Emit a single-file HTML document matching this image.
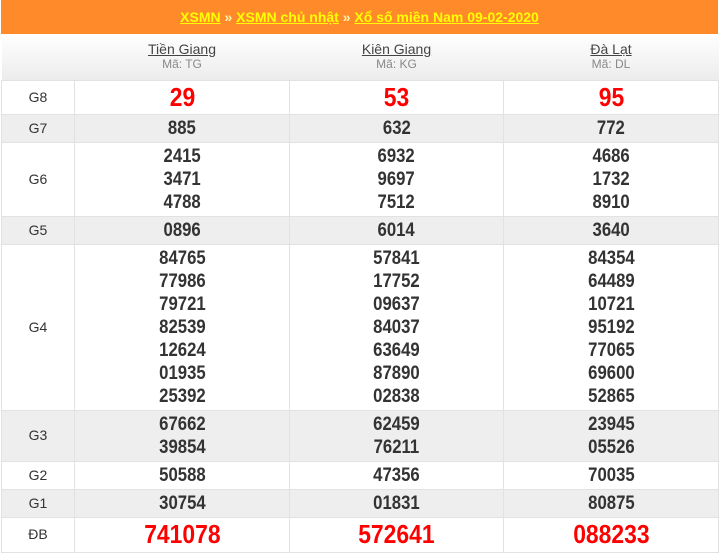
<!DOCTYPE html>
<html><head><meta charset="utf-8"><style>
*{margin:0;padding:0;box-sizing:border-box}
body{width:720px;height:554px;background:#fff;font-family:"Liberation Sans",sans-serif;position:relative;overflow:hidden}
.top{position:absolute;left:1px;top:0;width:717px;height:34px;background:#ff8a2a;text-align:center;font:bold 14px/34px "Liberation Sans",sans-serif;color:#ffff00}
.top a{color:#ffff00;text-decoration:underline}
.top .s{color:#fff6b0}
table{position:absolute;left:1px;top:34px;width:717px;border-collapse:collapse;table-layout:fixed}
td{border:1px solid #e2e2e2;text-align:center;vertical-align:middle;color:#333;font-weight:bold;font-size:19px;line-height:23px}
td span{display:inline-block;transform:scaleX(.88)}
td.l{font-weight:normal;font-size:14px;color:#333}
tr.g td{background:#eee}
tr.h td{background:linear-gradient(#fff,#ececec);border:none;border-bottom:1px solid #e2e2e2;font-weight:normal}
.pn{font-size:14px;color:#444;text-decoration:underline;line-height:16px}
.ma{font-size:12px;color:#888;line-height:15px;font-weight:normal}
.r{color:#f00;font-size:26px}
</style></head><body>
<div class="top"><a>XSMN</a> <span class="s">»</span> <a>XSMN chủ nhật</a> <span class="s">»</span> <a>Xổ số miền Nam 09-02-2020</a></div>
<table>
<colgroup><col style="width:73px"><col style="width:215px"><col style="width:214px"><col style="width:215px"></colgroup>
<tr class="h" style="height:46px"><td></td><td><div class="pn">Tiền Giang</div><div class="ma">Mã: TG</div></td><td><div class="pn">Kiên Giang</div><div class="ma">Mã: KG</div></td><td><div class="pn">Đà Lạt</div><div class="ma">Mã: DL</div></td></tr>
<tr style="height:34px"><td class="l">G8</td><td class="r"><span>29</span></td><td class="r"><span>53</span></td><td class="r"><span>95</span></td></tr>
<tr class="g" style="height:28px"><td class="l">G7</td><td><span>885</span></td><td><span>632</span></td><td><span>772</span></td></tr>
<tr style="height:74px"><td class="l">G6</td><td><span>2415<br>3471<br>4788</span></td><td><span>6932<br>9697<br>7512</span></td><td><span>4686<br>1732<br>8910</span></td></tr>
<tr class="g" style="height:28px"><td class="l">G5</td><td><span>0896</span></td><td><span>6014</span></td><td><span>3640</span></td></tr>
<tr style="height:166px"><td class="l">G4</td><td><span>84765<br>77986<br>79721<br>82539<br>12624<br>01935<br>25392</span></td><td><span>57841<br>17752<br>09637<br>84037<br>63649<br>87890<br>02838</span></td><td><span>84354<br>64489<br>10721<br>95192<br>77065<br>69600<br>52865</span></td></tr>
<tr class="g" style="height:51px"><td class="l">G3</td><td><span>67662<br>39854</span></td><td><span>62459<br>76211</span></td><td><span>23945<br>05526</span></td></tr>
<tr style="height:28px"><td class="l">G2</td><td><span>50588</span></td><td><span>47356</span></td><td><span>70035</span></td></tr>
<tr class="g" style="height:28px"><td class="l">G1</td><td><span>30754</span></td><td><span>01831</span></td><td><span>80875</span></td></tr>
<tr style="height:35px"><td class="l">ĐB</td><td class="r"><span>741078</span></td><td class="r"><span>572641</span></td><td class="r"><span>088233</span></td></tr>
</table>
</body></html>
